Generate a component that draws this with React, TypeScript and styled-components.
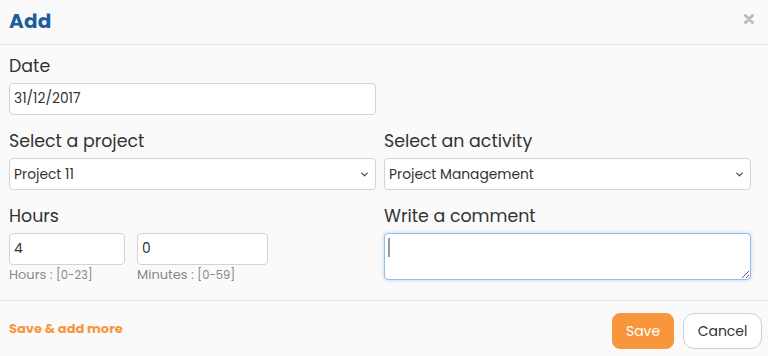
import React from 'react';
import styled, { createGlobalStyle } from 'styled-components';
import { ChevronDown } from 'lucide-react';

const GlobalStyle = createGlobalStyle`
   html, body {
      margin: 0;
      padding: 0;
      background: #fafafa;
   }
   body {
      font-family: 'Poppins', 'Noto Sans', 'Open Sans', sans-serif;
      color: #333;
   }
`;

const Modal = styled.div`
   width: 768px;
   height: 356px;
   background: #fafafa;
   display: flex;
   flex-direction: column;
`;

const Header = styled.header`
   height: 44px;
   border-bottom: 1px solid #e6e6e6;
   display: flex;
   align-items: center;
   justify-content: space-between;
   padding: 0 14px 0 9px;
`;

const Title = styled.h2`
   margin: 0;
   font-size: 20px;
   font-weight: 700;
   color: #1c5d9c;
   letter-spacing: 0.2px;
   margin-top: -3px;
`;

const Close = styled.button`
   border: 0;
   background: none;
   padding: 0;
   display: flex;
   margin-top: -7px;
   cursor: pointer;
`;

const Body = styled.div`
   display: grid;
   grid-template-columns: 367px 367px;
   column-gap: 8px;
   row-gap: 15px;
   padding: 10px 0 17px 9px;
   border-bottom: 1px solid #e6e6e6;
`;

const Field = styled.div<{ $span?: boolean }>`
   display: flex;
   flex-direction: column;
   grid-column: ${(p) => (p.$span ? '1 / 2' : 'auto')};
`;

const Label = styled.label`
   font-size: 17.4px;
   line-height: 22px;
   color: #333;
   margin-bottom: 6px;
`;

const Input = styled.input<{ $w?: number }>`
   box-sizing: border-box;
   height: 32px;
   width: ${(p) => (p.$w ? `${p.$w}px` : '100%')};
   border: 1px solid #d3d3d3;
   border-radius: 4px;
   background: #fff;
   padding: 0 4px;
   font-family: inherit;
   font-size: 13.8px;
   color: #333;
   outline: none;
`;

const SelectWrap = styled.div`
   position: relative;
   display: flex;
`;

const Select = styled.select`
   appearance: none;
   box-sizing: border-box;
   width: 100%;
   height: 32px;
   border: 1px solid #d3d3d3;
   border-radius: 4px;
   background: #fff;
   padding: 0 4px;
   font-family: inherit;
   font-size: 13.8px;
   color: #333;
   outline: none;
`;

const Arrow = styled(ChevronDown)`
   position: absolute;
   right: 6px;
   top: 11px;
   pointer-events: none;
   color: #444;
`;

const TimeRow = styled.div`
   display: flex;
   gap: 12px;
`;

const TimeCol = styled.div`
   display: flex;
   flex-direction: column;
`;

const Help = styled.span`
   font-size: 13px;
   line-height: 16px;
   margin-top: 2px;
   color: #888;
`;

const Range = styled.span`
   font-size: 11.5px;
`;

const AreaWrap = styled.div`
   position: relative;
   display: flex;
`;

const Area = styled.textarea`
   box-sizing: border-box;
   width: 368px;
   height: 47px;
   border: 1px solid #8fc0f0;
   border-radius: 4px;
   background: #fff;
   box-shadow: 0 0 3px 1px rgba(102, 170, 240, 0.3);
   font-family: inherit;
   font-size: 13px;
   padding: 4px;
   outline: none;
   resize: vertical;
   caret-color: transparent;
`;

const Caret = styled.span`
   position: absolute;
   left: 4px;
   top: 5px;
   width: 1.5px;
   height: 19px;
   background: #999;
`;

const Footer = styled.footer`
   flex: 1;
   display: flex;
   justify-content: space-between;
   align-items: flex-start;
   padding: 12px 6px 0 9px;
`;

const AddMore = styled.button`
   border: 0;
   background: none;
   padding: 0;
   margin-top: 6px;
   font-family: inherit;
   font-size: 13px;
   font-weight: 700;
   color: #f7963b;
   cursor: pointer;
`;

const Actions = styled.div`
   display: flex;
   gap: 9px;
`;

const Button = styled.button<{ $primary?: boolean }>`
   box-sizing: border-box;
   height: 36px;
   padding: 0 ${(p) => (p.$primary ? '13px' : '13.5px')};
   border-radius: ${(p) => (p.$primary ? '8px' : '11px')};
   border: 1px solid ${(p) => (p.$primary ? '#f7963b' : '#cfcfcf')};
   background: ${(p) => (p.$primary ? '#f7963b' : '#fff')};
   color: ${(p) => (p.$primary ? '#fff' : '#333')};
   font-family: inherit;
   font-size: 14px;
   cursor: pointer;
`;

const App: React.FC = () => (
   <>
      <GlobalStyle />
      <Modal>
         <Header>
            <Title>Add</Title>
            <Close aria-label="Close">
               <svg width="10" height="10" viewBox="0 0 10 10">
                  <path
                     d="M1.5 1.5 L8.5 8.5 M8.5 1.5 L1.5 8.5"
                     stroke="#bdbdbd"
                     strokeWidth="3"
                     strokeLinecap="round"
                  />
               </svg>
            </Close>
         </Header>
         <Body>
            <Field $span>
               <Label>Date</Label>
               <Input defaultValue="31/12/2017" />
            </Field>
            <Field $span>
               <Label>Select a project</Label>
               <SelectWrap>
                  <Select defaultValue="p11">
                     <option value="p11">Project 11</option>
                  </Select>
                  <Arrow size={11} strokeWidth={2.6} />
               </SelectWrap>
            </Field>
            <Field>
               <Label>Select an activity</Label>
               <SelectWrap>
                  <Select defaultValue="pm">
                     <option value="pm">Project Management</option>
                  </Select>
                  <Arrow size={11} strokeWidth={2.6} />
               </SelectWrap>
            </Field>
            <Field>
               <Label>Hours</Label>
               <TimeRow>
                  <TimeCol>
                     <Input $w={116} defaultValue="4" />
                     <Help>
                        Hours : <Range>[0-23]</Range>
                     </Help>
                  </TimeCol>
                  <TimeCol>
                     <Input $w={131} defaultValue="0" />
                     <Help>
                        Minutes : <Range>[0-59]</Range>
                     </Help>
                  </TimeCol>
               </TimeRow>
            </Field>
            <Field>
               <Label>Write a comment</Label>
               <AreaWrap>
                  <Area />
                  <Caret />
               </AreaWrap>
            </Field>
         </Body>
         <Footer>
            <AddMore>Save &amp; add more</AddMore>
            <Actions>
               <Button $primary>Save</Button>
               <Button>Cancel</Button>
            </Actions>
         </Footer>
      </Modal>
   </>
);

export default App;
